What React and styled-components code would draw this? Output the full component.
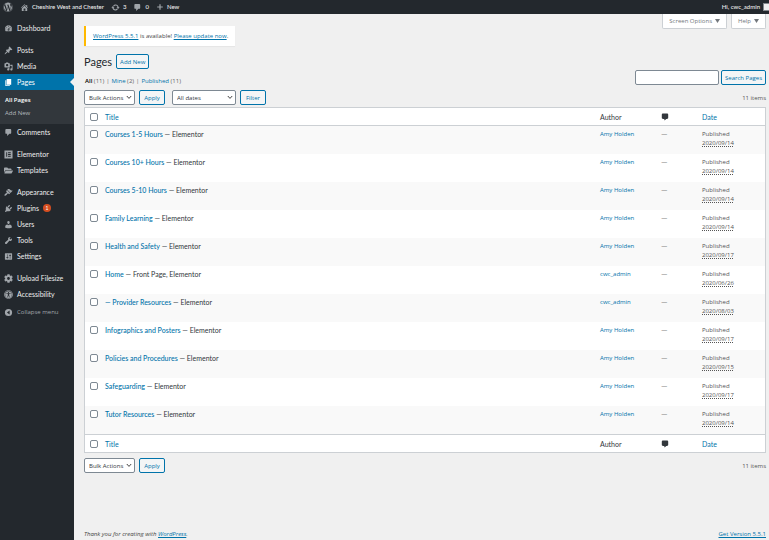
import React from 'react';
import styled, { createGlobalStyle } from 'styled-components';
import { FaWordpress, FaCog, FaFolderOpen, FaUniversalAccess } from 'react-icons/fa';

const GlobalStyle = createGlobalStyle`
  * {
    box-sizing: border-box;
  }
  body {
    margin: 0;
    background: #f0f0f0;
    color: #444;
    font-family: "Open Sans", "Noto Sans", sans-serif;
    font-size: 6px;
    line-height: 8px;
  }
  a {
    color: #0073aa;
  }
  button, input, select {
    font-family: inherit;
    margin: 0;
  }
`

const PATHS = {
    dashboard: 'M3.76 16h12.48c1.1-1.37 1.76-3.11 1.76-5 0-4.42-3.58-8-8-8s-8 3.58-8 8c0 1.89.66 3.63 1.76 5zM10 4c.55 0 1 .45 1 1s-.45 1-1 1-1-.45-1-1 .45-1 1-1zM6 6c.55 0 1 .45 1 1s-.45 1-1 1-1-.45-1-1 .45-1 1-1zm8 0c.55 0 1 .45 1 1s-.45 1-1 1-1-.45-1-1 .45-1 1-1zm-5.37 5.55L12 7v6c0 1.1-.9 2-2 2s-2-.9-2-2c0-.57.24-1.08.63-1.45zM4 10c.55 0 1 .45 1 1s-.45 1-1 1-1-.45-1-1 .45-1 1-1zm12 0c.55 0 1 .45 1 1s-.45 1-1 1-1-.45-1-1 .45-1 1-1zm-5 3c0-.55-.45-1-1-1s-1 .45-1 1 .45 1 1 1 1-.45 1-1z',
    pin: 'M10.44 3.02l1.82-1.82 6.36 6.35-1.83 1.82c-1.05-.68-2.48-.57-3.41.36l-.75.75c-.92.93-1.04 2.35-.35 3.41l-1.83 1.82-2.41-2.41-2.8 2.79c-.42.42-3.38 2.71-3.8 2.29s1.86-3.39 2.28-3.81l2.79-2.79L4.1 9.36l1.83-1.82c1.05.69 2.48.57 3.4-.36l.75-.75c.93-.92 1.05-2.35.36-3.41z',
    media: 'M13 11V4c0-.55-.45-1-1-1h-1.67L9 1H5L3.67 3H2c-.55 0-1 .45-1 1v7c0 .55.45 1 1 1h10c.55 0 1-.45 1-1zM7 4.5c1.38 0 2.5 1.12 2.5 2.5S8.38 9.5 7 9.5 4.5 8.38 4.5 7 5.62 4.5 7 4.5zM14 6h5v10.5c0 1.38-1.12 2.5-2.5 2.5S14 17.88 14 16.5s1.12-2.5 2.5-2.5c.17 0 .34.02.5.05V9h-3V6zm-4 8.05V13h2v3.5c0 1.38-1.12 2.5-2.5 2.5S7 17.88 7 16.5 8.12 14 9.5 14c.17 0 .34.02.5.05z',
    page: 'M6 15V2h10v13H6zm-1 1h8v2H3V5h2v11z',
    comment: 'M5 2h9c1.1 0 2 .9 2 2v7c0 1.1-.9 2-2 2h-2l-5 5v-5H5c-1.1 0-2-.9-2-2V4c0-1.1.9-2 2-2z',
    elementor: 'M1 1h18v18H1zM5 5v10h2V5zm4 0v2h6V5zm0 4v2h6V9zm0 4v2h6v-2z',
    brush: 'M14.48 11.06L7.41 3.99l1.5-1.5c.5-.56 2.3-.47 3.51.32 1.21.8 1.43 1.28 2.91 2.1 1.18.64 2.45 1.26 4.45.85zm-.71.71L6.7 4.7 4.93 6.47c-.39.39-.39 1.02 0 1.41l1.06 1.06c.39.39.39 1.03 0 1.42-.6.6-1.43 1.11-2.21 1.69-.35.26-.7.53-1.01.84C1.43 14.23.4 16.08 1.4 17.07c.99 1 2.84-.03 4.18-1.36.31-.31.58-.66.85-1.02.57-.78 1.08-1.61 1.69-2.21.39-.39 1.02-.39 1.41 0l1.06 1.06c.39.39 1.02.39 1.41 0z',
    plug: 'M13.11 4.36L9.87 7.6 8 5.73l3.24-3.24c.35-.34 1.05-.2 1.56.32.52.51.66 1.21.31 1.55zm-8 1.77l.91-1.12 9.01 9.01-1.19.84c-.71.71-2.63 1.16-3.82 1.16H6.14L4.9 17.26c-.59.59-1.54.59-2.12 0-.59-.58-.59-1.53 0-2.12l1.24-1.24v-3.88c0-1.13.4-3.19 1.09-3.89zm7.26 3.97l3.24-3.24c.34-.35 1.04-.21 1.55.31.52.51.66 1.21.31 1.55l-3.24 3.25z',
    user: 'M10 9.25c-2.27 0-2.73-3.44-2.73-3.44C7 4.02 7.82 2 9.97 2c2.16 0 2.98 2.02 2.71 3.81 0 0-.41 3.44-2.68 3.44zm0 2.57L12.72 10c2.39 0 4.52 2.33 4.52 4.53v2.49s-3.65 1.13-7.24 1.13c-3.65 0-7.24-1.13-7.24-1.13v-2.49c0-2.25 1.94-4.48 4.47-4.48z',
    wrench: 'M16.68 9.77c-1.34 1.34-3.3 1.67-4.95.99l-5.41 6.52c-.99.99-2.59.99-3.58 0s-.99-2.59 0-3.57l6.52-5.42c-.68-1.65-.35-3.61.99-4.95 1.28-1.28 3.12-1.62 4.72-1.06l-2.89 2.89 2.82 2.82 2.86-2.87c.53 1.58.18 3.39-1.08 4.65z',
    settings: 'M18 16V4c0-.55-.45-1-1-1H3c-.55 0-1 .45-1 1v12c0 .55.45 1 1 1h14c.55 0 1-.45 1-1zM8 11h1c.55 0 1 .45 1 1s-.45 1-1 1H8v1.5c0 .28-.22.5-.5.5s-.5-.22-.5-.5V13H6c-.55 0-1-.45-1-1s.45-1 1-1h1V5.5c0-.28.22-.5.5-.5s.5.22.5.5V11zm5-2h-1c-.55 0-1-.45-1-1s.45-1 1-1h1V5.5c0-.28.22-.5.5-.5s.5.22.5.5V7h1c.55 0 1 .45 1 1s-.45 1-1 1h-1v5.5c0 .28-.22.5-.5.5s-.5-.22-.5-.5V9z',
    collapse: 'M10 2a8 8 0 1 0 0 16a8 8 0 0 0 0-16zM12.500 5.500v9L6.500 10z',
    home: 'M16 8.500l1.530 1.530-1.060 1.060L10 4.600l-6.470 6.490-1.060-1.060L10 2.500l4 4v-2h2v4zm-6-2.460l6 5.990V18H4v-5.970zM12 17v-5H8v5h4z',
    update: 'M10.200 3.280c3.530 0 6.430 2.610 6.920 6h2.080l-3.500 4-3.500-4h2.320c-.45-1.970-2.210-3.450-4.320-3.450-1.450 0-2.730.71-3.540 1.780L4.950 5.660C6.230 4.200 8.110 3.280 10.200 3.280zm-.4 13.440c-3.520 0-6.430-2.610-6.920-6H.8l3.500-4c1.170 1.330 2.330 2.670 3.500 4H5.480c.45 1.970 2.210 3.450 4.320 3.450 1.450 0 2.730-.71 3.540-1.780l1.710 1.950c-1.280 1.460-3.150 2.380-5.250 2.380z',
    plus: 'M17 8.500v3h-5.500V17h-3v-5.500H3v-3h5.500V3h3v5.500z',
    bubble: 'M5 1h10c1.700 0 3 1.300 3 3v8c0 1.700-1.300 3-3 3h-2l-4 4-1-4H5c-1.700 0-3-1.300-3-3V4c0-1.700 1.300-3 3-3z',
}

const Icon = ({ name, size = 9 }) => (
    <svg width={size} height={size} viewBox="0 0 20 20" fill="currentColor" fillRule="evenodd" aria-hidden="true">
        <path d={PATHS[name]} />
    </svg>
)

const Page = styled.div`
  display: flex;
  flex-direction: column;
  min-height: 100vh;
`

const AdminBar = styled.header`
  display: flex;
  align-items: center;
  gap: 7px;
  height: 14px;
  padding-left: 3px;
  background: #23282d;
`

const BarLink = styled.a`
  display: flex;
  align-items: center;
  gap: 3px;
  color: #eee;
  font-family: Lato, sans-serif;
  font-weight: 500;
  text-decoration: none;
  white-space: nowrap;

  svg {
    color: #a0a5aa;
  }
`

const Account = styled(BarLink)`
  margin-left: auto;
`

const Avatar = styled.span`
  width: 6px;
  height: 8px;
  border: 1px solid #82878c;
  border-right: none;
  background: #eee;
`

const Columns = styled.div`
  display: flex;
  flex: 1;
`

const Sidebar = styled.nav`
  flex: none;
  width: 74px;
  padding-top: 6px;
  background: #23282d;
`

const MenuItem = styled.a`
  position: relative;
  display: flex;
  align-items: center;
  gap: 4px;
  height: 16px;
  margin-top: ${({ $spaced }) => $spaced ? '6px' : '0'};
  padding-left: 4px;
  background: ${({ $active }) => $active ? '#0073aa' : 'transparent'};
  color: ${({ $active }) => $active ? '#fff' : '#eee'};
  font-family: Lato, sans-serif;
  font-size: 7px;
  text-decoration: none;
  white-space: nowrap;

  svg {
    flex: none;
    color: ${({ $active }) => $active ? '#fff' : '#a0a5aa'};
  }

  &::after {
    content: "";
    display: ${({ $active }) => $active ? 'block' : 'none'};
    position: absolute;
    right: 0;
    top: 4px;
    border: 4px solid transparent;
    border-left-width: 0;
    border-right-color: #f0f0f0;
  }
`

const SubMenu = styled.div`
  display: flex;
  flex-direction: column;
  padding: 4px 0 4px 5px;
  background: #32373c;
`

const SubLink = styled.a`
  line-height: 13px;
  color: ${({ $current }) => $current ? '#fff' : '#b4b9be'};
  font-weight: ${({ $current }) => $current ? 600 : 400};
  text-decoration: none;
`

const Badge = styled.span`
  width: 8px;
  height: 8px;
  border-radius: 4px;
  background: #d54e21;
  color: #fff;
  font-size: 5px;
  text-align: center;
`

const Collapse = styled.button`
  display: flex;
  align-items: center;
  gap: 4px;
  height: 16px;
  margin-top: 2px;
  padding: 0 0 0 4px;
  border: none;
  background: none;
  color: #a0a5aa;
  font-size: 6px;
`

const Main = styled.main`
  display: flex;
  flex: 1;
  flex-direction: column;
  min-width: 0;
  padding: 0 3px 0 10px;
`

const TopRow = styled.div`
  display: flex;
  align-items: flex-start;
  justify-content: space-between;
`

const Notice = styled.div`
  margin-top: 12px;
  padding: 6px 7px;
  border-left: 2px solid #ffb900;
  background: #fff;
  box-shadow: 0 1px 1px rgba(0, 0, 0, 0.04);
`

const MetaTabs = styled.div`
  display: flex;
  gap: 4px;
`

const MetaTab = styled.button`
  display: flex;
  align-items: center;
  gap: 3px;
  height: 15px;
  padding: 0 6px;
  border: 1px solid #ccd0d4;
  border-top: none;
  border-radius: 0 0 2px 2px;
  background: #fff;
  color: #72777c;
  font-size: 6px;
`

const Heading = styled.div`
  display: flex;
  align-items: center;
  gap: 4px;
  margin-top: 8px;
  margin-bottom: 1px;

  h1 {
    margin: 0;
    color: #23282d;
    font-family: Lato, sans-serif;
    font-size: 11px;
    font-weight: 400;
    line-height: 14px;
  }
`

const Button = styled.button`
  min-width: 26px;
  height: 15px;
  padding: 0 3px;
  border: 1px solid #0073aa;
  border-radius: 2px;
  background: #f3f5f6;
  color: #0073aa;
  font-size: 6px;
  line-height: 8px;
  white-space: nowrap;
`

const FilterRow = styled.div`
  display: flex;
  align-items: center;
  justify-content: space-between;
`

const StatusLinks = styled.div`
  display: flex;
  gap: 2px;
  padding: 7px 0 0 1px;
  color: #666;

  a {
    text-decoration: none;
  }
  a[aria-current] {
    color: #000;
    font-weight: 600;
  }
`

const SearchForm = styled.form`
  display: flex;
  gap: 2px;
`

const SearchInput = styled.input`
  width: 84px;
  height: 15px;
  padding: 0 4px;
  border: 1px solid #7e8993;
  border-radius: 2px;
  background: #fff;
  font-size: 6px;
`

const TableNav = styled.div`
  display: flex;
  align-items: center;
  gap: 4px;
  margin: 5px 0 2px;
`

const Count = styled.span`
  margin-left: auto;
  color: #555;
`

const SelectBox = styled.div`
  position: relative;
  width: ${({ $wide }) => $wide ? '64px' : '51px'};
  margin-left: ${({ $wide }) => $wide ? '3px' : '0'};

  select {
    display: block;
    appearance: none;
    width: 100%;
    height: 15px;
    padding: 0 4px;
    border: 1px solid #7e8993;
    border-radius: 2px;
    background: #fff;
    color: #32373c;
    font-size: 6px;
  }
  svg {
    position: absolute;
    right: 3px;
    top: 5px;
    pointer-events: none;
  }
`

const Table = styled.table`
  width: 100%;
  table-layout: fixed;
  border: 1px solid #ccd0d4;
  border-spacing: 0;
  background: #fff;

  th, td {
    padding: 0 5px;
    text-align: left;
    font-weight: 400;
  }
  th {
    height: 18px;
    color: #32373c;
    font-family: Lato, sans-serif;
    font-size: 7px;
  }
  th a {
    text-decoration: none;
  }
  thead th {
    border-bottom: 1px solid #ccd0d4;
  }
  tfoot th {
    border-top: 1px solid #ccd0d4;
  }
  td {
    height: 28px;
    padding-top: 4px;
    color: #555;
    line-height: 9px;
    vertical-align: top;
  }
  tbody tr:nth-child(odd) {
    background: #f9f9f9;
  }
  td a {
    text-decoration: none;
  }
  abbr {
    text-decoration: underline dotted;
  }
  svg {
    display: block;
    color: #32373c;
  }
`

const Col = styled.col`
  width: ${({ $width }) => $width};
`

const Check = styled.input`
  display: block;
  appearance: none;
  width: 8px;
  height: 8px;
  border: 1px solid #7e8993;
  border-radius: 2px;
  background: #fff;
`

const TitleCell = styled.td`
  && {
    color: #32373c;
    font-family: Lato, sans-serif;
    font-size: 7px;
  }
  a {
    font-weight: 500;
  }
`

const Footer = styled.footer`
  display: flex;
  justify-content: space-between;
  margin-top: auto;
  padding-bottom: 2px;
`

const menu = [
    { icon: 'dashboard', label: 'Dashboard' },
    { icon: 'pin', label: 'Posts', spaced: true },
    { icon: 'media', label: 'Media' },
    { icon: 'page', label: 'Pages', active: true, sub: ['All Pages', 'Add New'] },
    { icon: 'comment', label: 'Comments' },
    { icon: 'elementor', label: 'Elementor', spaced: true },
    { Glyph: FaFolderOpen, label: 'Templates' },
    { icon: 'brush', label: 'Appearance', spaced: true },
    { icon: 'plug', label: 'Plugins', badge: 1 },
    { icon: 'user', label: 'Users' },
    { icon: 'wrench', label: 'Tools' },
    { icon: 'settings', label: 'Settings' },
    { Glyph: FaCog, label: 'Upload Filesize', spaced: true },
    { Glyph: FaUniversalAccess, label: 'Accessibility' },
]

const pages = [
    { title: 'Courses 1-5 Hours', state: 'Elementor', author: 'Amy Holden', date: '2020/09/14' },
    { title: 'Courses 10+ Hours', state: 'Elementor', author: 'Amy Holden', date: '2020/09/14' },
    { title: 'Courses 5-10 Hours', state: 'Elementor', author: 'Amy Holden', date: '2020/09/14' },
    { title: 'Family Learning', state: 'Elementor', author: 'Amy Holden', date: '2020/09/14' },
    { title: 'Health and Safety', state: 'Elementor', author: 'Amy Holden', date: '2020/09/17' },
    { title: 'Home', state: 'Front Page, Elementor', author: 'cwc_admin', date: '2020/06/26' },
    { title: '— Provider Resources', state: 'Elementor', author: 'cwc_admin', date: '2020/08/03' },
    { title: 'Infographics and Posters', state: 'Elementor', author: 'Amy Holden', date: '2020/09/17' },
    { title: 'Policies and Procedures', state: 'Elementor', author: 'Amy Holden', date: '2020/09/15' },
    { title: 'Safeguarding', state: 'Elementor', author: 'Amy Holden', date: '2020/09/17' },
    { title: 'Tutor Resources', state: 'Elementor', author: 'Amy Holden', date: '2020/09/14' },
]

const Select = ({ label, option, wide }) => (
    <SelectBox $wide={wide}>
        <select aria-label={label}>
            <option>{option}</option>
        </select>
        <svg width="6" height="5" viewBox="0 0 6 5" fill="none" stroke="#444" aria-hidden="true">
            <path d="M.8 1l2.200 2.400L5.200 1" />
        </svg>
    </SelectBox>
)

const Caret = () => (
    <svg width="5" height="4" viewBox="0 0 5 4" fill="currentColor" aria-hidden="true">
        <path d="M0 0h5L2.500 4z" />
    </svg>
)

const HeadingCells = () => (
    <tr>
        <th><Check type="checkbox" aria-label="Select All" /></th>
        <th><a href="#title">Title</a></th>
        <th>Author</th>
        <th><Icon name="bubble" size={8} /></th>
        <th><a href="#date">Date</a></th>
    </tr>
)

const App = () => (
    <Page>
        <GlobalStyle />
        <AdminBar>
            <BarLink href="#wp" aria-label="WordPress"><FaWordpress size={10} /></BarLink>
            <BarLink href="#site"><Icon name="home" />Cheshire West and Chester</BarLink>
            <BarLink href="#updates"><Icon name="update" />3</BarLink>
            <BarLink href="#comments"><Icon name="comment" />0</BarLink>
            <BarLink href="#new"><Icon name="plus" size={8} />New</BarLink>
            <Account href="#account">Hi, cwc_admin<Avatar /></Account>
        </AdminBar>
        <Columns>
            <Sidebar>
                {menu.map(({ icon, Glyph, label, spaced, active, sub, badge }) => (
                    <React.Fragment key={label}>
                        <MenuItem href="#menu" $spaced={spaced} $active={active}>
                            {Glyph ? <Glyph size={9} /> : <Icon name={icon} />}
                            {label}
                            {badge && <Badge>{badge}</Badge>}
                        </MenuItem>
                        {sub && (
                            <SubMenu>
                                {sub.map((item, i) => <SubLink key={item} href="#sub" $current={i === 0}>{item}</SubLink>)}
                            </SubMenu>
                        )}
                    </React.Fragment>
                ))}
                <Collapse type="button"><Icon name="collapse" />Collapse menu</Collapse>
            </Sidebar>
            <Main>
                <TopRow>
                    <Notice>
                        <a href="#version">WordPress 5.5.1</a> is available! <a href="#update">Please update now</a>.
                    </Notice>
                    <MetaTabs>
                        <MetaTab type="button">Screen Options <Caret /></MetaTab>
                        <MetaTab type="button">Help <Caret /></MetaTab>
                    </MetaTabs>
                </TopRow>
                <Heading>
                    <h1>Pages</h1>
                    <Button type="button">Add New</Button>
                </Heading>
                <FilterRow>
                    <StatusLinks>
                        <span><a href="#all" aria-current="page">All</a> (11)</span>|
                        <span><a href="#mine">Mine</a> (2)</span>|
                        <span><a href="#published">Published</a> (11)</span>
                    </StatusLinks>
                    <SearchForm>
                        <SearchInput type="search" aria-label="Search Pages" />
                        <Button type="button">Search Pages</Button>
                    </SearchForm>
                </FilterRow>
                <TableNav>
                    <Select label="Select bulk action" option="Bulk Actions" />
                    <Button type="button">Apply</Button>
                    <Select label="Filter by date" option="All dates" wide />
                    <Button type="button">Filter</Button>
                    <Count>11 items</Count>
                </TableNav>
                <Table>
                    <colgroup>
                        <Col $width="15px" />
                        <Col />
                        <Col $width="9%" />
                        <Col $width="6%" />
                        <Col $width="10%" />
                    </colgroup>
                    <thead>
                        <HeadingCells />
                    </thead>
                    <tbody>
                        {pages.map(({ title, state, author, date }) => (
                            <tr key={title}>
                                <td><Check type="checkbox" aria-label={`Select ${title}`} /></td>
                                <TitleCell><a href="#edit">{title}</a> — {state}</TitleCell>
                                <td><a href="#author">{author}</a></td>
                                <td>—</td>
                                <td>Published<br /><abbr>{date}</abbr></td>
                            </tr>
                        ))}
                    </tbody>
                    <tfoot>
                        <HeadingCells />
                    </tfoot>
                </Table>
                <TableNav>
                    <Select label="Select bulk action" option="Bulk Actions" />
                    <Button type="button">Apply</Button>
                    <Count>11 items</Count>
                </TableNav>
                <Footer>
                    <em>Thank you for creating with <a href="#wordpress">WordPress</a>.</em>
                    <a href="#get">Get Version 5.5.1</a>
                </Footer>
            </Main>
        </Columns>
    </Page>
)

export default App;
